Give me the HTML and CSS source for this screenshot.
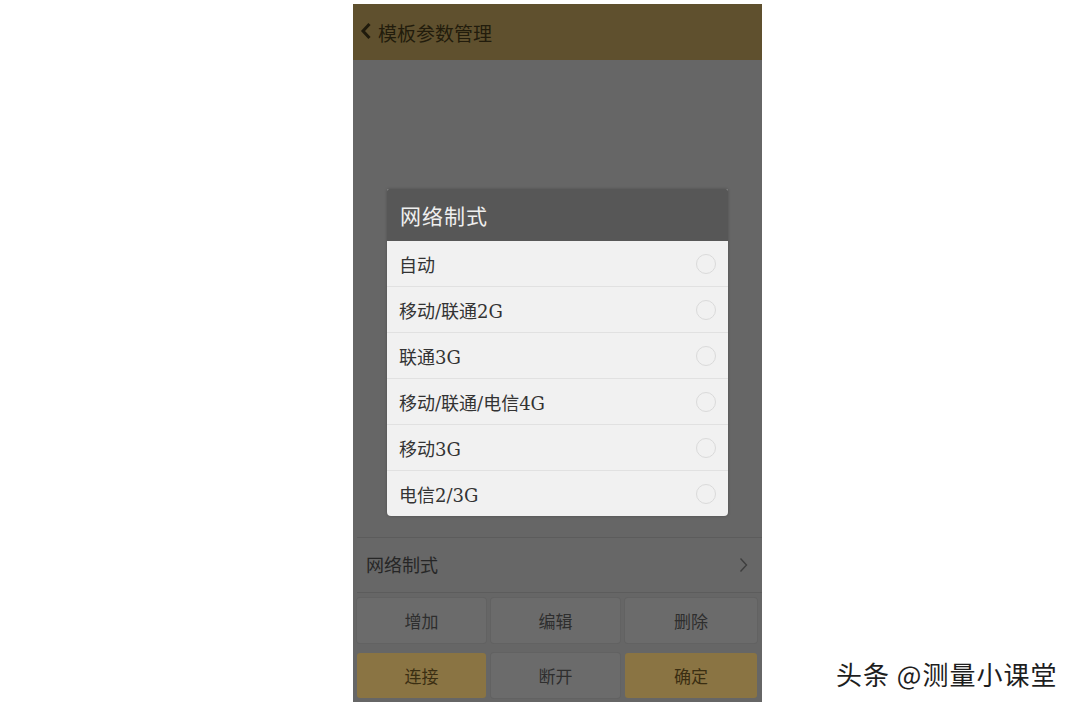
FILE: index.html
```html
<!DOCTYPE html>
<html lang="zh-CN">
<head>
    <meta charset="UTF-8">
    <title>模板参数管理</title>
    <link rel="stylesheet" href="styles.css">
</head>
<body>
    <div class="phone">
        <header class="topbar">
            <svg class="back" width="12" height="18" viewBox="0 0 12 18">
                <path d="M9.5 2 L3 9 L9.5 16" fill="none" stroke="#1f1a0c" stroke-width="3"/>
            </svg>
            <span>模板参数管理</span>
        </header>

        <div class="spacer"></div>

        <div class="list-row">
            <span>网络制式</span>
            <svg width="9" height="16" viewBox="0 0 9 16">
                <path d="M1.5 1.5 L7.5 8 L1.5 14.5" fill="none" stroke="#3e3e3e" stroke-width="1.4"/>
            </svg>
        </div>

        <div class="buttons">
            <button class="btn">增加</button>
            <button class="btn">编辑</button>
            <button class="btn">删除</button>
            <button class="btn gold">连接</button>
            <button class="btn">断开</button>
            <button class="btn gold">确定</button>
        </div>

        <!-- boîte de dialogue par-dessus l'écran assombri -->
        <div class="dialog">
            <div class="dialog-title">网络制式</div>
            <div class="option"><span>自动</span><i class="radio"></i></div>
            <div class="option"><span>移动/联通2G</span><i class="radio"></i></div>
            <div class="option"><span>联通3G</span><i class="radio"></i></div>
            <div class="option"><span>移动/联通/电信4G</span><i class="radio"></i></div>
            <div class="option"><span>移动3G</span><i class="radio"></i></div>
            <div class="option last"><span>电信2/3G</span><i class="radio"></i></div>
        </div>
    </div>

    <div class="watermark">头条 @测量小课堂</div>
</body>
</html>
```

FILE: styles.css
```css
body {
    margin: 0;
    padding: 0;
    background-color: #fff;
    font-family: "DejaVu Serif", "Noto Sans CJK SC", serif;
    width: 1080px;
    height: 710px;
    overflow: hidden;
    position: relative;
}

.phone {
    position: relative;
    margin: 4px 0 0 353px;
    width: 409px;
    height: 698px;
    background-color: #666;
    display: flex;
    flex-direction: column;
}

.topbar {
    height: 56px;
    background-color: #5f502e;
    display: flex;
    align-items: center;
    padding-left: 7px;
    color: #221c0c;
    font-size: 19px;
    flex-shrink: 0;
}

.topbar .back {
    margin-right: 6px;
    margin-top: -2px;
}

.spacer {
    flex: 1;
}

.list-row {
    height: 54px;
    border-top: 1px solid #5c5c5c;
    border-bottom: 1px solid #5c5c5c;
    margin-left: 4px;
    padding: 0 14px 0 9px;
    display: flex;
    align-items: center;
    justify-content: space-between;
    font-size: 18px;
    color: #262626;
    background-color: #676767;
}

.list-row span {
    margin-top: -3px;
}

.buttons {
    display: grid;
    grid-template-columns: 129px 129px 132px;
    grid-auto-rows: 45px;
    gap: 10px 5px;
    padding: 5px 5px 4px 4px;
}

.btn {
    border: none;
    border-radius: 3px;
    background-color: #6b6b6b;
    font-family: "DejaVu Serif", "Noto Sans CJK SC", serif;
    font-size: 17px;
    color: #2e2e2e;
    padding: 0;
    box-shadow: 0 0 0 1px #626262;
}

.btn.gold {
    background-color: #8a7443;
    color: #3a2e12;
    box-shadow: none;
}

.dialog {
    position: absolute;
    top: 185px;
    left: 34px;
    width: 341px;
    background-color: #f1f1f1;
    border-radius: 2px 2px 4px 4px;
    box-shadow: 0 0 3px rgba(0, 0, 0, 0.25);
    overflow: hidden;
}

.dialog-title {
    height: 52px;
    background-color: #575757;
    color: #efefef;
    font-size: 21px;
    display: flex;
    align-items: center;
    padding-left: 13px;
    letter-spacing: 1px;
}

.option {
    height: 45px;
    border-bottom: 1px solid #e1e1e1;
    display: flex;
    align-items: center;
    justify-content: space-between;
    padding: 0 12px 0 12px;
    font-size: 18px;
    color: #333;
}

.option.last {
    border-bottom: none;
}

.radio {
    width: 20px;
    height: 20px;
    border: 1.5px solid #dadada;
    border-radius: 50%;
    box-sizing: border-box;
}

.watermark {
    position: absolute;
    left: 836px;
    top: 655px;
    font-family: "Noto Sans CJK SC", sans-serif;
    font-size: 26px;
    color: #1e1e1e;
    letter-spacing: 1px;
}
```
